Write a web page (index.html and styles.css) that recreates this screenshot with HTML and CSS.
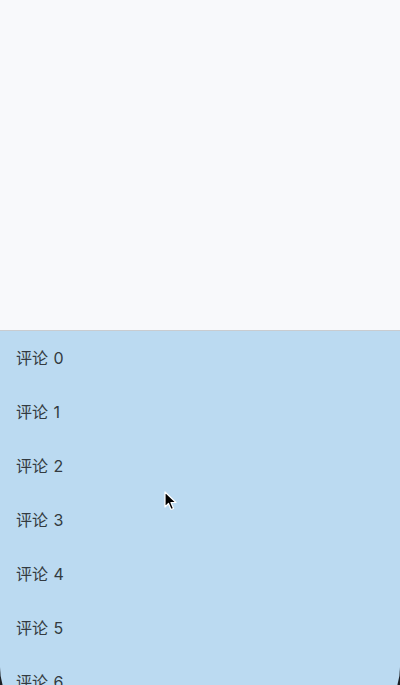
FILE: index.html
```html
<!DOCTYPE html>
<html lang="zh">
<head>
<meta charset="utf-8">
<title>评论</title>
<link rel="stylesheet" href="styles.css">
</head>
<body>
<div class="screen">
  <div class="top"></div>
  <div class="sheet">
    <div class="item">评论 0</div>
    <div class="item">评论 1</div>
    <div class="item">评论 2</div>
    <div class="item">评论 3</div>
    <div class="item">评论 4</div>
    <div class="item">评论 5</div>
    <div class="item">评论 6</div>
    <div class="item">评论 7</div>
  </div>
  <svg class="cursor" width="14" height="20" viewBox="0 0 14 20">
    <path d="M1 1 L1 16 L4.5 12.5 L7 18.5 L9.5 17.5 L7 11.5 L12 11.5 Z" fill="#000" stroke="#fff" stroke-width="1.2" stroke-linejoin="round"/>
  </svg>
</div>
</body>
</html>
```

FILE: styles.css
```css
html, body {
  margin: 0;
  padding: 0;
  background: #1c1f24;
}
.screen {
  position: relative;
  width: 400px;
  height: 685px;
  overflow: hidden;
  display: flex;
  flex-direction: column;
  background: #1c1f24;
}
.top {
  height: 330px;
  flex: none;
  background: #f8f9fb;
  border-bottom: 1px solid #c9ccd0;
}
.sheet {
  flex: none;
  height: 400px;
  background: #bbdaf1;
  border-radius: 0 0 64px 64px;
  display: flex;
  flex-direction: column;
}
.item {
  height: 54px;
  box-sizing: border-box;
  padding: 0 0 2px 16px;
  flex: none;
  display: flex;
  align-items: center;
  font-family: Inter, "Noto Sans CJK SC", sans-serif;
  font-size: 16px;
  word-spacing: 1px;
  color: #333a40;
}
.cursor {
  position: absolute;
  left: 164px;
  top: 491px;
}
```
